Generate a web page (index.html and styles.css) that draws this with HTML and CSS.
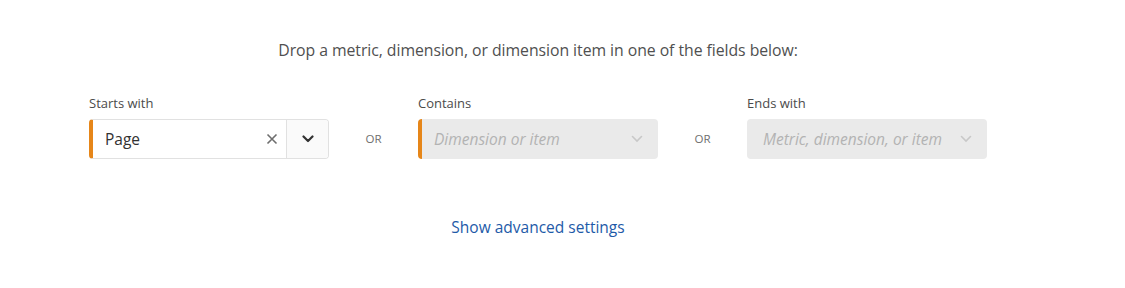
FILE: index.html
```html
<!DOCTYPE html>
<html lang="en">
<head>
    <meta charset="UTF-8">
    <title>Segment Rule</title>
    <link rel="stylesheet" href="styles.css">
</head>
<body>
    <div class="panel">
        <p class="hint">Drop a metric, dimension, or dimension item in one of the fields below:</p>

        <div class="fields">
            <div class="field">
                <label class="field-label">Starts with</label>
                <div class="picker filled">
                    <span class="picker-value">Page</span>
                    <button class="clear" type="button">
                        <svg width="12" height="12" viewBox="0 0 12 12"><path d="M1.5 1.5l9 9M10.5 1.5l-9 9" stroke="#6e6e6e" stroke-width="1.6" fill="none"/></svg>
                    </button>
                    <button class="toggle" type="button">
                        <svg width="12" height="8" viewBox="0 0 12 8"><path d="M1.5 1.5l4.5 4.5 4.5-4.5" stroke="#323232" stroke-width="2.2" fill="none" stroke-linecap="round" stroke-linejoin="round"/></svg>
                    </button>
                </div>
            </div>

            <span class="or">OR</span>

            <div class="field">
                <label class="field-label">Contains</label>
                <div class="picker disabled">
                    <span class="picker-placeholder">Dimension or item</span>
                    <span class="caret">
                        <svg width="12" height="8" viewBox="0 0 12 8"><path d="M1.5 1.5l4.5 4.5 4.5-4.5" stroke="#c8c8c8" stroke-width="1.6" fill="none" stroke-linecap="round"/></svg>
                    </span>
                </div>
            </div>

            <span class="or">OR</span>

            <div class="field">
                <label class="field-label">Ends with</label>
                <div class="picker disabled plain">
                    <span class="picker-placeholder">Metric, dimension, or item</span>
                    <span class="caret">
                        <svg width="12" height="8" viewBox="0 0 12 8"><path d="M1.5 1.5l4.5 4.5 4.5-4.5" stroke="#c8c8c8" stroke-width="1.6" fill="none" stroke-linecap="round"/></svg>
                    </span>
                </div>
            </div>
        </div>

        <a class="advanced" href="#">Show advanced settings</a>
    </div>
</body>
</html>
```

FILE: styles.css
```css
body {
    margin: 0;
    font-family: "Open Sans", Arial, sans-serif;
    background: #fff;
    color: #4b4b4b;
}
.panel {
    width: 898px;
    margin-left: 89px;
    display: flex;
    flex-direction: column;
    align-items: center;
}
.hint {
    margin: 39px 0 0;
    font-size: 15.8px;
    line-height: 22px;
    color: #505050;
    letter-spacing: -0.05px;
}
.fields {
    display: flex;
    align-items: flex-end;
    width: 100%;
    margin-top: 33px;
}
.field {
    width: 240px;
    display: flex;
    flex-direction: column;
}
.field-label {
    font-size: 13px;
    line-height: 18px;
    color: #4b4b4b;
    margin-bottom: 7px;
}
.or {
    flex: 1;
    text-align: center;
    font-size: 11.5px;
    color: #6e6e6e;
    line-height: 40px;
}
.picker {
    height: 40px;
    box-sizing: border-box;
    border-radius: 4px;
    display: flex;
    align-items: center;
}
.picker.filled {
    border: 1px solid #e1e1e1;
    border-left: 4px solid #e68619;
    background: #fff;
}
.picker.disabled {
    background: #eaeaea;
    border-left: 4px solid #e68619;
}
.picker.plain {
    border-left-color: #eaeaea;
}
.picker-value {
    flex: 1;
    padding-left: 12px;
    font-size: 15.5px;
    color: #323232;
}
.picker-placeholder {
    flex: 1;
    padding-left: 12px;
    font-size: 15.5px;
    font-style: italic;
    color: #b3b3b3;
    white-space: nowrap;
}
.clear {
    border: 0;
    background: none;
    width: 28px;
    height: 38px;
    padding: 0;
    display: flex;
    align-items: center;
    justify-content: center;
}
.toggle {
    border: 0;
    border-left: 1px solid #e1e1e1;
    background: #fafafa;
    width: 42px;
    height: 38px;
    padding: 0;
    border-radius: 0 3px 3px 0;
    display: flex;
    align-items: center;
    justify-content: center;
}
.caret {
    width: 42px;
    display: flex;
    justify-content: center;
}
.advanced {
    margin-top: 57px;
    font-size: 15.5px;
    color: #1e5aa8;
    text-decoration: none;
}
```
